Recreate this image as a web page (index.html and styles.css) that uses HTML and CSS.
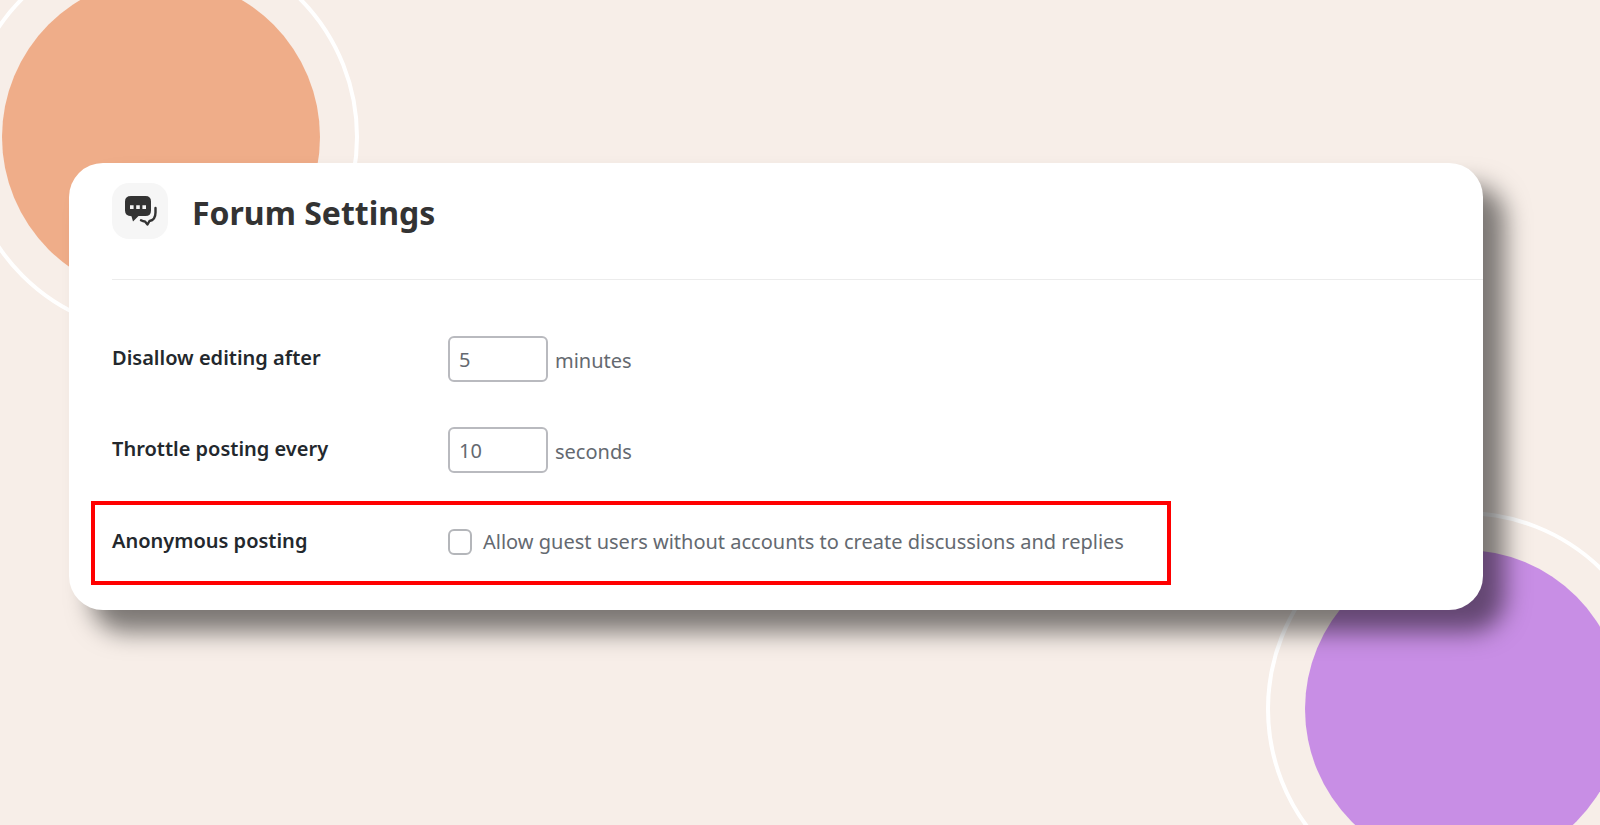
FILE: index.html
```html
<!DOCTYPE html>
<html lang="en">
<head>
<meta charset="utf-8">
<meta name="viewport" content="width=device-width, initial-scale=1">
<title>Forum Settings</title>
<link rel="stylesheet" href="styles.css">
</head>
<body>
<div class="stage">
  <div class="orb orb-orange" aria-hidden="true"></div>
  <div class="orb orb-purple" aria-hidden="true"></div>
  <main class="card">
    <header class="card-header">
      <span class="card-icon">
        <svg viewBox="0 0 56 56" width="56" height="56" aria-hidden="true">
          <path fill="#333" d="M19 13H33.500Q39 13 39 18.500V27.500Q39 33 33.500 33H26.500L21 38.500L19.500 33.300Q13 33 13 27.500V18.500Q13 13 19 13Z"/>
          <path fill="#f6f6f6" d="M18 22.300h3.600v3.600h-3.600zM24.200 22.300h3.600v3.600h-3.600zM30.400 22.300h3.600v3.600h-3.600z"/>
          <path fill="none" stroke="#333" stroke-width="2.400" stroke-linecap="round" stroke-linejoin="round" d="M43.500 25V29.500Q43.500 37 37.500 38L35.500 41.500L33 38.500Q31 38.500 29 37.300"/>
        </svg>
      </span>
      <h1 class="card-title">Forum Settings</h1>
    </header>
    <form class="settings">
      <div class="row">
        <label class="row-label" for="edit-lock">Disallow editing after</label>
        <div class="row-field">
          <input class="number" id="edit-lock" type="text" inputmode="numeric" value="5">
          <span class="unit">minutes</span>
        </div>
      </div>
      <div class="row">
        <label class="row-label" for="throttle">Throttle posting every</label>
        <div class="row-field">
          <input class="number" id="throttle" type="text" inputmode="numeric" value="10">
          <span class="unit">seconds</span>
        </div>
      </div>
      <div class="row row-highlight">
        <span class="row-label">Anonymous posting</span>
        <div class="row-field">
          <input class="check" id="anonymous" type="checkbox">
          <label class="check-label" for="anonymous">Allow guest users without accounts to create discussions and replies</label>
        </div>
      </div>
    </form>
  </main>
</div>
</body>
</html>
```
FILE: styles.css
```css
* {
  box-sizing: border-box;
}

body {
  margin: 0;
  background: #f7eee8;
  color: #646970;
  font-family: "Noto Sans", "Open Sans", sans-serif;
  font-size: 20px;
  line-height: 28px;
}

.stage {
  position: relative;
  min-height: 100vh;
  padding: 163px 117px 163px 69px;
  overflow: hidden;
}

/* Decorative discs, each with a thin outer ring */
.orb {
  position: absolute;
  width: 396px;
  height: 396px;
  border: 4px solid #fff;
  border-radius: 50%;
  padding: 35px;
}

.orb::before {
  content: "";
  display: block;
  height: 100%;
  border-radius: 50%;
  background: currentColor;
}

.orb-orange {
  top: -61px;
  left: -37px;
  color: #efad89;
}

.orb-purple {
  right: -62px;
  bottom: -82px;
  color: #c88ee5;
}

.card {
  position: relative;
  padding: 20px 0 25px 43px;
  border-radius: 34px;
  background: #fff;
  box-shadow: 22px 22px 24px rgba(0, 0, 0, 0.5);
}

.card-header {
  display: flex;
  align-items: center;
  gap: 24px;
  padding-bottom: 40px;
  border-bottom: 1px solid #ececec;
}

.card-icon {
  display: flex;
  border-radius: 17px;
  background: #f6f6f6;
}

.card-title {
  margin: 0;
  padding-top: 4px;
  color: #333;
  font-size: 32px;
  font-weight: 700;
  line-height: 44px;
}

.settings {
  display: flex;
  flex-direction: column;
  padding-top: 56px;
}

.row {
  display: grid;
  grid-template-columns: 336px auto;
  align-items: center;
  margin-bottom: 45px;
}

.row-label {
  padding-bottom: 2px;
  color: #23282d;
  font-weight: 600;
}

.row-field {
  display: flex;
  align-items: center;
  gap: 7px;
}

.number {
  width: 100px;
  height: 46px;
  padding: 0 9px;
  border: 2px solid #b9babf;
  border-radius: 6px;
  background: #fff;
  color: #646970;
  font: inherit;
}

.unit {
  padding-top: 4px;
}

.row-highlight {
  width: fit-content;
  margin: -17px 0 0 -21px;
  padding: 22px 43px 24px 17px;
  border: 4px solid #f00;
}

.check {
  appearance: none;
  width: 24px;
  height: 26px;
  margin: 0 4px 0 0;
  border: 2px solid #b4b6ba;
  border-radius: 6px;
  background: #fff;
}

.check:checked {
  background: #646970;
}
```
